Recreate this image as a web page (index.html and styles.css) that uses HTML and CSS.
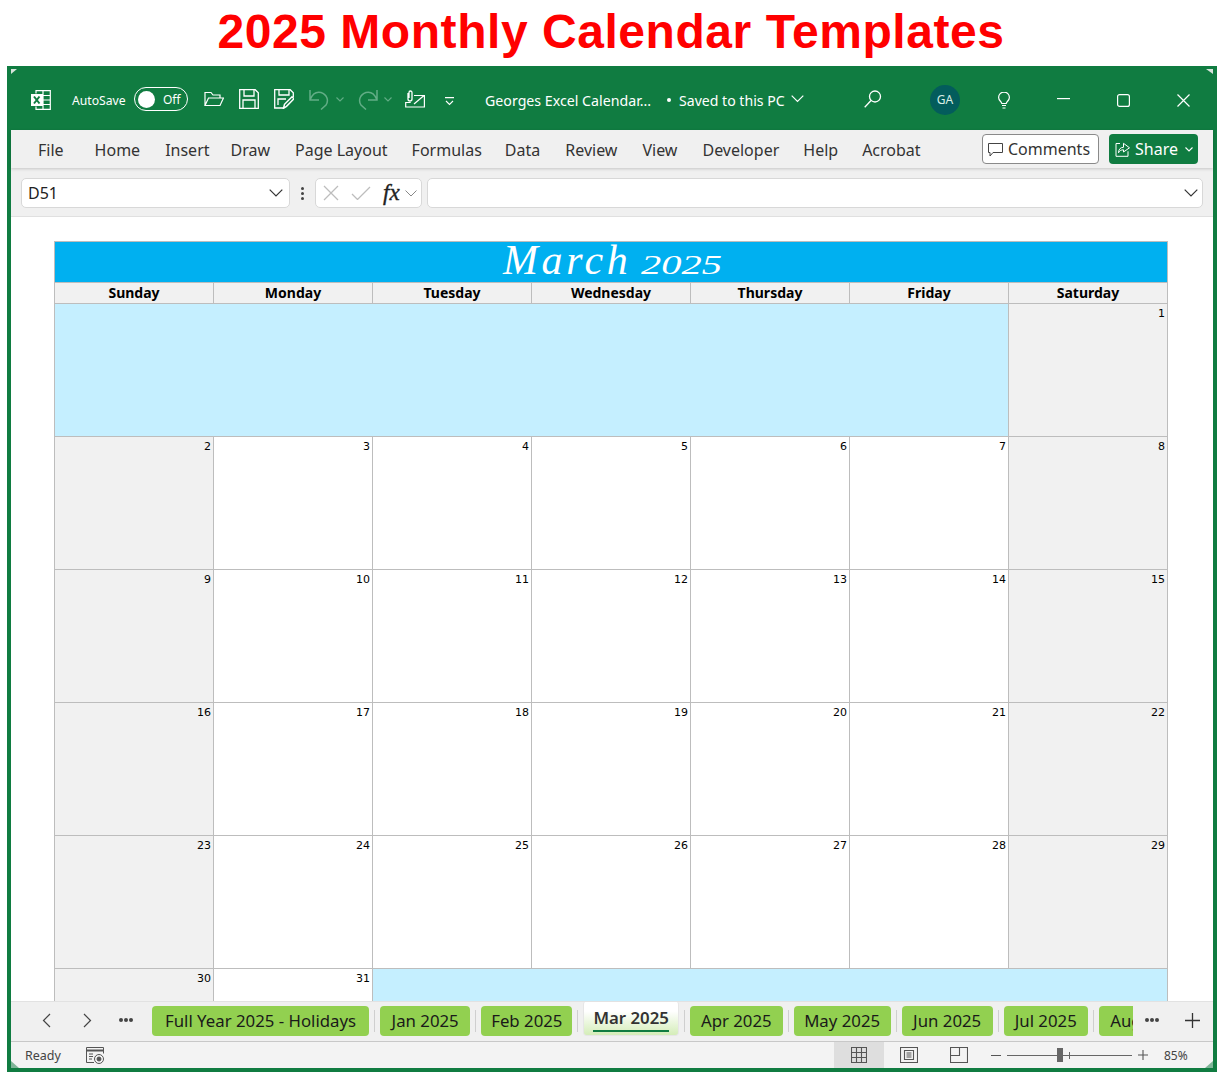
FILE: index.html
```html
<!DOCTYPE html>
<html lang="en">
<head>
<meta charset="utf-8">
<title>2025 Monthly Calendar Templates</title>
<link rel="stylesheet" href="styles.css">
</head>
<body>
<h1 class="headline">2025 Monthly Calendar Templates</h1>
<main class="window">
  <span class="corner corner-tl"></span><span class="corner corner-tr"></span><span class="corner corner-bl"></span><span class="corner corner-br"></span>
  <header class="titlebar">
    <svg class="ti i-excel" width="20" height="20" viewBox="0 0 20 20" fill="none" stroke="#fff" stroke-width="1.2"><path d="M5 3.500V.7h14.300v18.600H5v-2.800M12 1v18M12 5.500h7M12 10h7M12 14.500h7"/><rect x="0" y="4" width="12" height="12" fill="#fff" stroke="none"/><path d="M3 6.500l5.500 7M8.500 6.500l-5.500 7" stroke="#107c41" stroke-width="2"/></svg>
    <span class="autosave">AutoSave</span>
    <span class="toggle"><span class="knob"></span><span class="toggle-text">Off</span></span>
    <svg class="ti i-open" width="20" height="20" viewBox="0 0 20 20" fill="none" stroke="#fff" stroke-width="1.2"><path d="M1 16.500V3.500h6l2 2.500h7v3M1 16.500l3.500-7.500H19.500l-3.500 7.500z"/></svg>
    <svg class="ti i-save" width="20" height="20" viewBox="0 0 20 20" fill="none" stroke="#fff" stroke-width="1.300"><path d="M.7.700h15.500l3.100 3.100v15.500H.7z"/><path d="M5 1v6h10V1M4 19v-8h12v8"/></svg>
    <svg class="ti i-saveas" width="20" height="20" viewBox="0 0 20 20" fill="none" stroke="#fff" stroke-width="1.300"><path d="M9 19H.7V.7h15.500l3.100 3.100V8"/><path d="M5 1v5h10V1M4 16v-6h8"/><path d="M9.500 19.300l1-4 7.500-7.500 2 2-7.500 7.500z" stroke-width="1.500"/></svg>
    <svg class="ti i-undo" width="20" height="21" viewBox="0 0 20 21" fill="none" stroke="#62ad86" stroke-width="1.500"><path d="M1 1v10h9M1.500 10C4 4 8 2.500 12 3.500c6 2 8 8 5 12.500l-5 4.500"/></svg>
    <svg class="ti i-chev-small dim" width="8" height="5" viewBox="0 0 8 5" fill="none" stroke="#62ad86" stroke-width="1.100"><path d="M.5.500 4 4 7.500.5"/></svg>
    <svg class="ti i-redo" width="20" height="21" viewBox="0 0 20 21" fill="none" stroke="#62ad86" stroke-width="1.500"><path d="M19 1v10h-9M18.500 10C16 4 12 2.500 8 3.500c-6 2-8 8-5 12.500l5 4.500"/></svg>
    <svg class="ti i-chev-small dim2" width="8" height="5" viewBox="0 0 8 5" fill="none" stroke="#62ad86" stroke-width="1.100"><path d="M.5.500 4 4 7.500.5"/></svg>
    <svg class="ti i-mail" width="20" height="18" viewBox="0 0 20 18" fill="none" stroke="#fff" stroke-width="1.200"><path d="M9 5.500h10.400V17H.7v-4.500h5M9 14l10-8.500"/><path d="M3 3v6a2 2 0 0 0 4 0V2.500a1.500 1.500 0 0 0-3 0V8" stroke-width="1.300"/></svg>
    <svg class="ti i-more" width="11" height="9" viewBox="0 0 11 9" fill="none" stroke="#fff" stroke-width="1.100"><path d="M1 .6h9M2 4l3.500 3.500L9 4"/></svg>
    <span class="docname">Georges Excel Calendar...</span>
    <span class="dot"></span>
    <span class="saved">Saved to this PC</span>
    <svg class="ti i-saved-chev" width="13" height="8" viewBox="0 0 13 8" fill="none" stroke="#fff" stroke-width="1.200"><path d="M.7.700 6.500 6.500 12.300.7"/></svg>
    <svg class="ti i-search" width="18" height="18" viewBox="0 0 18 18" fill="none" stroke="#fff" stroke-width="1.300"><circle cx="11" cy="6.500" r="5.500"/><path d="M7 10.500.7 17.300"/></svg>
    <span class="avatar">GA</span>
    <svg class="ti i-bulb" width="12" height="17" viewBox="0 0 12 17" fill="none" stroke="#fff" stroke-width="1.200"><path d="M3.800 11.500C3.500 9.500.6 8.500.6 5.500a5.400 5.400 0 0 1 10.800 0c0 3-2.900 4-3.200 6z"/><path d="M4 13.500h4M4.500 16h3"/></svg>
    <svg class="ti i-min" width="13" height="2" viewBox="0 0 13 2"><rect width="13" height="1.200" fill="#fff"/></svg>
    <svg class="ti i-max" width="13" height="13" viewBox="0 0 13 13" fill="none" stroke="#fff" stroke-width="1.200"><rect x=".6" y=".6" width="11.800" height="11.800" rx="2"/></svg>
    <svg class="ti i-close" width="13" height="13" viewBox="0 0 13 13" fill="none" stroke="#fff" stroke-width="1.200"><path d="M.5.500l12 12M12.500.5l-12 12"/></svg>
  </header>

  <nav class="ribbon">
    <span class="rtab rtab-file">File</span>
    <span class="rtab rtab-plus">Home</span>
    <span class="rtab rtab-insert">Insert</span>
    <span class="rtab rtab-plus">Draw</span>
    <span class="rtab">Page Layout</span>
    <span class="rtab rtab-minus">Formulas</span>
    <span class="rtab rtab-plus">Data</span>
    <span class="rtab rtab-plus">Review</span>
    <span class="rtab rtab-plus">View</span>
    <span class="rtab">Developer</span>
    <span class="rtab">Help</span>
    <span class="rtab">Acrobat</span>
    <button class="comments"><svg width="15" height="15" viewBox="0 0 15 15" fill="none" stroke="#444" stroke-width="1"><path d="M.5 1.500h14v9H5L2 14v-3.500H.5z"/></svg>Comments</button>
    <button class="share"><svg width="15" height="15" viewBox="0 0 15 15" fill="none" stroke="#fff" stroke-width="1"><path d="M5 1.500H1v12.800h12v-5"/><path d="M8.500 .8l6 4.500-6 4.200V7.300c-2.500 0-4 1-5 3 0-3.500 2-5.500 5-5.500z" transform="translate(0 .5)"/></svg>Share<svg class="share-chev" width="8" height="5" viewBox="0 0 8 5" fill="none" stroke="#fff" stroke-width="1.100"><path d="M.5.500 4 4 7.500.5"/></svg></button>
  </nav>

  <section class="formula">
    <div class="namebox"><span>D51</span><svg width="14" height="8" viewBox="0 0 14 8" fill="none" stroke="#333" stroke-width="1.200"><path d="M.7.700 7 7 13.300.7"/></svg></div>
    <div class="vdots"><i></i><i></i><i></i></div>
    <div class="fxbox">
      <svg width="18" height="16" viewBox="0 0 18 16" fill="none" stroke="#bdbdbd" stroke-width="1.300"><path d="M2 1l14 14M16 1 2 15"/></svg>
      <svg class="fx-check" width="20" height="14" viewBox="0 0 20 14" fill="none" stroke="#bdbdbd" stroke-width="1.300"><path d="M1 8l5.500 5.500L19 1"/></svg>
      <span class="fx">fx</span>
      <svg width="12" height="7" viewBox="0 0 12 7" fill="none" stroke="#888" stroke-width="1"><path d="M.5.500 6 6 11.500.5"/></svg>
    </div>
    <div class="inputbox"><svg width="14" height="8" viewBox="0 0 14 8" fill="none" stroke="#333" stroke-width="1.200"><path d="M.7.700 7 7 13.300.7"/></svg></div>
  </section>

  <section class="sheet">
    <div class="calendar">
      <div class="month"><span class="month-name">March</span> <span class="month-year">2025</span></div>
      <div class="dow">Sunday</div><div class="dow">Monday</div><div class="dow">Tuesday</div><div class="dow">Wednesday</div><div class="dow">Thursday</div><div class="dow">Friday</div><div class="dow">Saturday</div>
      <div class="blank blank-6"></div><div class="day we">1</div>
      <div class="day we">2</div><div class="day">3</div><div class="day">4</div><div class="day">5</div><div class="day">6</div><div class="day">7</div><div class="day we">8</div>
      <div class="day we">9</div><div class="day">10</div><div class="day">11</div><div class="day">12</div><div class="day">13</div><div class="day">14</div><div class="day we">15</div>
      <div class="day we">16</div><div class="day">17</div><div class="day">18</div><div class="day">19</div><div class="day">20</div><div class="day">21</div><div class="day we">22</div>
      <div class="day we">23</div><div class="day">24</div><div class="day">25</div><div class="day">26</div><div class="day">27</div><div class="day">28</div><div class="day we">29</div>
      <div class="day we">30</div><div class="day">31</div><div class="blank blank-5"></div>
    </div>
  </section>

  <section class="tabsbar">
    <svg class="nav-prev" width="9" height="15" viewBox="0 0 9 15" fill="none" stroke="#444" stroke-width="1.200"><path d="M8 1 1.500 7.500 8 14"/></svg>
    <svg class="nav-next" width="9" height="15" viewBox="0 0 9 15" fill="none" stroke="#444" stroke-width="1.200"><path d="M1 1l6.500 6.500L1 14"/></svg>
    <span class="dots3 dots-left"><i></i><i></i><i></i></span>
    <div class="tabs">
      <span class="tab tab-wide">Full Year 2025 - Holidays</span><span class="sep"></span>
      <span class="tab">Jan 2025</span><span class="sep"></span>
      <span class="tab tab-narrow">Feb 2025</span><span class="sep"></span>
      <span class="tab tab-active">Mar 2025</span><span class="sep"></span>
      <span class="tab tab-tight">Apr 2025</span><span class="sep"></span>
      <span class="tab tab-may">May 2025</span><span class="sep"></span>
      <span class="tab">Jun 2025</span><span class="sep"></span>
      <span class="tab tab-tight">Jul 2025</span><span class="sep"></span>
      <span class="tab tab-cut">Aug 2025</span>
    </div>
    <span class="dots3 dots-right"><i></i><i></i><i></i></span>
    <svg class="add" width="15" height="15" viewBox="0 0 15 15" stroke="#333" stroke-width="1.300"><path d="M7.500 0v15M0 7.500h15"/></svg>
  </section>

  <footer class="status">
    <span class="ready">Ready</span>
    <svg class="macro" width="18" height="17" viewBox="0 0 18 17" fill="none" stroke="#555" stroke-width="1"><path d="M8 15.500H.5V.5h17v6"/><path d="M.5 3.500h17" stroke-width="2"/><path d="M3 7h4M3 9.500h4M3 12h3"/><circle cx="13" cy="12" r="4.500"/><circle cx="13" cy="12" r="2" fill="#555"/></svg>
    <div class="views">
      <span class="view view-on"><svg width="16" height="16" viewBox="0 0 16 16" fill="none" stroke="#555" stroke-width="1.100"><path d="M.5.500h15v15H.5zM.5 5.500h15M.5 10.500h15M5.500.5v15M10.500.5v15"/></svg></span>
      <span class="view"><svg width="18" height="16" viewBox="0 0 18 16" fill="none" stroke="#555" stroke-width="1.100"><path d="M.5.500h17v15H.5zM4.500 3.500h9v9h-9zM6.500 6h5M6.500 8h5M6.500 10h5"/></svg></span>
      <span class="view"><svg width="18" height="16" viewBox="0 0 18 16" fill="none" stroke="#555" stroke-width="1.100"><path d="M.5.500h17v15H.5zM.5 8.500h9V.5"/></svg></span>
    </div>
    <span class="zoom-minus"></span>
    <span class="slider"><span class="tick"></span><span class="thumb"></span></span>
    <svg class="zoom-plus" width="10" height="10" viewBox="0 0 10 10" stroke="#555" stroke-width="1.100"><path d="M5 0v10M0 5h10"/></svg>
    <span class="pct">85%</span>
  </footer>
</main>
</body>
</html>
```
FILE: styles.css
```css
* { box-sizing: border-box; }
html, body { margin: 0; padding: 0; background: #fff; }
body { width: 1224px; height: 1080px; overflow: hidden; font-family: "Noto Sans", sans-serif; }

.headline {
  margin: 0;
  height: 66px;
  padding: 4px 2px 0 0;
  text-align: center;
  font: 700 48px/56px "Liberation Sans", Arial, sans-serif;
  letter-spacing: 0.55px;
  color: #ff0000;
}

.window {
  position: relative;
  margin-left: 7px;
  width: 1210px;
  height: 1006px;
  border: 4px solid #107c41;
  border-top: 0;
  display: flex;
  flex-direction: column;
  background: #fff;
}
.corner { position: absolute; background: #d8e4dc; z-index: 2; }
.corner-tl { left: 0; top: 3px; width: 6px; height: 5px; clip-path: polygon(0 0, 100% 0, 0 100%); }
.corner-tr { right: 0; top: 3px; width: 7px; height: 5px; clip-path: polygon(0 0, 100% 0, 100% 100%); }
.corner-bl { left: 0; bottom: 0; width: 8px; height: 7px; background: #7fb598; clip-path: polygon(0 0, 100% 100%, 0 100%); }
.corner-br { right: 0; bottom: 0; width: 8px; height: 7px; background: #7fb598; clip-path: polygon(100% 0, 100% 100%, 0 100%); }

/* title bar */
.titlebar {
  flex: 0 0 64px;
  margin: 0 -4px;
  padding-top: 4px;
  background: #107c41;
  display: flex;
  align-items: center;
  color: #fff;
}
.ti { flex: none; display: block; }
.i-excel { margin-left: 24px; }
.autosave { margin-left: 21px; width: 54px; font-size: 12.200px; white-space: nowrap; }
.toggle {
  margin-left: 8px; margin-top: -2px;
  flex: none; width: 54px; height: 24px;
  border: 1px solid #fff; border-radius: 12px;
  display: flex; align-items: center; padding-left: 3px;
}
.knob { width: 17px; height: 17px; border-radius: 50%; background: #fff; }
.toggle-text { margin-left: 8px; font-size: 12px; }
.i-open { margin-left: 16px; margin-top: -2px; }
.i-save { margin-left: 15px; margin-top: -2px; }
.i-saveas { margin-left: 15px; margin-top: -2px; }
.i-undo { margin-left: 15px; margin-top: -2px; }
.dim { margin-left: 7px; margin-top: -2px; }
.i-redo { margin-left: 14px; margin-top: -2px; }
.dim2 { margin-left: 6px; margin-top: -2px; }
.i-mail { margin-left: 13px; margin-top: -3px; }
.i-more { margin-left: 19px; margin-top: 2px; }
.docname { margin-left: 30px; width: 167px; white-space: nowrap; font-size: 14.200px; }
.dot { margin-left: 15px; width: 4px; height: 4px; border-radius: 50%; background: #fff; flex: none; }
.saved { margin-left: 8px; width: 106px; white-space: nowrap; font-size: 14.100px; }
.i-saved-chev { margin-left: 6px; margin-top: -2px; }
.i-search { margin-left: 60px; margin-top: -2px; }
.avatar {
  margin-left: 48px; flex: none; width: 30px; height: 30px; border-radius: 50%;
  background: #035c5c; color: #d9eee6; font-size: 12px; text-align: center; line-height: 30px;
}
.i-bulb { margin-left: 38px; }
.i-min { margin-left: 47px; margin-top: -2px; }
.i-max { margin-left: 47px; }
.i-close { margin-left: 47px; }

/* ribbon */
.ribbon {
  flex: 0 0 38px;
  background: #f0f0f0;
  display: flex;
  align-items: center;
  padding-left: 27px;
  gap: 24px;
  box-shadow: 0 1px 3px rgba(0,0,0,.18);
  position: relative;
  z-index: 1;
  color: #333;
}
.rtab { font-size: 16px; white-space: nowrap; line-height: 22px; margin-top: 2px; }
.rtab-file { margin-right: 7px; }
.rtab-plus { margin-right: 1px; }
.rtab-minus { margin-right: -1px; }
.rtab-insert { margin-right: -3px; }
.comments, .share {
  font-family: "Noto Sans", sans-serif; font-size: 16px;
  height: 30px; border-radius: 4px; display: flex; align-items: center; flex: none; padding: 0;
}
.comments {
  margin-left: auto; width: 117px; background: #fff; border: 1px solid #8a8a8a; color: #333;
  gap: 5px; padding-left: 5px;
}
.share {
  margin-left: -14px; margin-right: 15px; width: 89px; background: #107c41; border: 0; color: #fff;
  gap: 5px; padding-left: 6px;
}
.share-chev { margin-left: 2px; }

/* formula bar */
.formula {
  flex: 0 0 49px;
  background: #f0f0f0;
  border-bottom: 1px solid #e0e0e0;
  display: flex;
  padding: 10px 10px 0 10px;
  align-items: flex-start;
}
.namebox, .fxbox, .inputbox {
  height: 30px; background: #fff; border: 1px solid #d8d8d8; border-radius: 5px;
  display: flex; align-items: center; flex: none;
}
.namebox { width: 269px; justify-content: space-between; padding: 0 6px 0 6px; font-size: 16px; color: #222; }
.vdots { width: 25px; height: 30px; display: flex; flex-direction: column; align-items: center; justify-content: center; gap: 2px; flex: none; }
.vdots i { width: 3px; height: 3px; background: #444; border-radius: 50%; }
.fxbox { width: 107px; padding-left: 6px; }
.fx-check { margin-left: 11px; }
.fx { margin-left: 12px; width: 22px; font: italic 400 23px/26px "Liberation Serif", serif; color: #222; -webkit-text-stroke: .35px #222; }
.inputbox { margin-left: 5px; width: 776px; justify-content: flex-end; padding-right: 4px; }

/* sheet */
.sheet {
  flex: 1 1 0;
  min-height: 0;
  overflow: hidden;
  padding: 24px 0 0 43px;
  background: #fff;
}
.calendar {
  width: 1114px;
  display: grid;
  grid-template-columns: repeat(7, 159px);
  grid-template-rows: 41px 21px repeat(6, 133px);
  border-top: 1px solid #bdbdbd;
  border-left: 1px solid #bdbdbd;
}
.calendar > div { border-right: 1px solid #bdbdbd; border-bottom: 1px solid #bdbdbd; }
.month {
  grid-column: 1 / -1;
  background: #00b0f0;
  color: #fff;
  padding-left: 448px;
  font-family: "Liberation Serif", serif;
  font-style: italic;
  line-height: 36px;
  white-space: nowrap;
}
.month-name { font-size: 42px; letter-spacing: 3.600px; }
.month-year {
  display: inline-block;
  margin-left: 6px;
  font-size: 27px;
  transform: scaleX(1.5);
  transform-origin: left center;
}
.dow {
  background: #f1f1f1;
  text-align: center;
  font: 700 14px/19px "Noto Sans", sans-serif;
  color: #000;
}
.day {
  background: #fff;
  text-align: right;
  padding: 3px 2px 0 0;
  font: 400 11px/14px "DejaVu Sans", sans-serif;
  color: #000;
}
.we { background: #f1f1f1; }
.blank { background: #c5efff; }
.blank-6 { grid-column: span 6; }
.blank-5 { grid-column: span 5; }

/* sheet tabs */
.tabsbar {
  flex: 0 0 41px;
  background: #f0f0f0;
  border-top: 1px solid #e2e2e2;
  border-bottom: 1px solid #c8c8c8;
  display: flex;
  align-items: center;
  position: relative;
  z-index: 1;
}
.nav-prev { margin-left: 31px; flex: none; margin-top: -3px; }
.nav-next { margin-left: 32px; flex: none; margin-top: -3px; }
.dots3 { display: flex; gap: 1px; flex: none; margin-top: -3px; }
.dots3 i { width: 4px; height: 4px; border-radius: 50%; background: #444; }
.dots-left { margin-left: 27px; }
.tabs {
  margin-left: 19px;
  width: 981px;
  height: 39px;
  overflow: hidden;
  flex: none;
  display: flex;
  align-items: flex-end;
  padding-bottom: 5px;
}
.tab {
  flex: none;
  height: 30px;
  padding: 0 11.500px;
  background: #92d050;
  border-radius: 4px;
  color: #1a1a1a;
  font-size: 16.800px;
  line-height: 30px;
  white-space: nowrap;
}
.tab-wide { padding: 0 13px; }
.tab-narrow { padding: 0 10px; }
.tab-tight { padding: 0 11px; }
.tab-may { padding: 0 10.500px; }
.sep { flex: none; width: 1px; height: 22px; margin: 0 5px 4px; background: #cfcfcf; }
.tab-active {
  position: relative;
  height: 35px;
  padding: 0 9px;
  background: linear-gradient(#fff 30%, #d4edb8);
  border: 1px solid #e6e6e6;
  border-top: 0;
  font-weight: 600;
  color: #333;
  line-height: 33px;
}
.tab-active::after {
  content: ""; position: absolute; left: 9px; right: 9px; bottom: 3px; height: 2px; background: #107c41;
}
.tab-cut { border-radius: 4px 0 0 4px; }
.dots-right { margin-left: 12px; }
.add { margin-left: 26px; flex: none; margin-top: -3px; }

/* status bar */
.status {
  flex: 0 0 26px;
  background: #f3f3f3;
  display: flex;
  align-items: center;
  color: #444;
}
.ready { margin-left: 14px; width: 36px; font-size: 12.500px; white-space: nowrap; }
.macro { margin-left: 25px; flex: none; }
.views { margin-left: 730px; display: flex; height: 100%; }
.view { width: 50px; display: flex; align-items: center; justify-content: center; }
.view-on { background: #dedede; }
.zoom-minus { margin-left: 7px; width: 10px; height: 1px; background: #555; flex: none; }
.slider { position: relative; margin-left: 6px; width: 125px; height: 1px; background: #666; flex: none; }
.thumb { position: absolute; left: 50px; top: -7px; width: 6px; height: 14px; background: #666; }
.tick { position: absolute; left: 62px; top: -3px; width: 1px; height: 7px; background: #666; }
.zoom-plus { margin-left: 6px; flex: none; }
.pct { margin-left: 16px; font-size: 12px; white-space: nowrap; }
```
